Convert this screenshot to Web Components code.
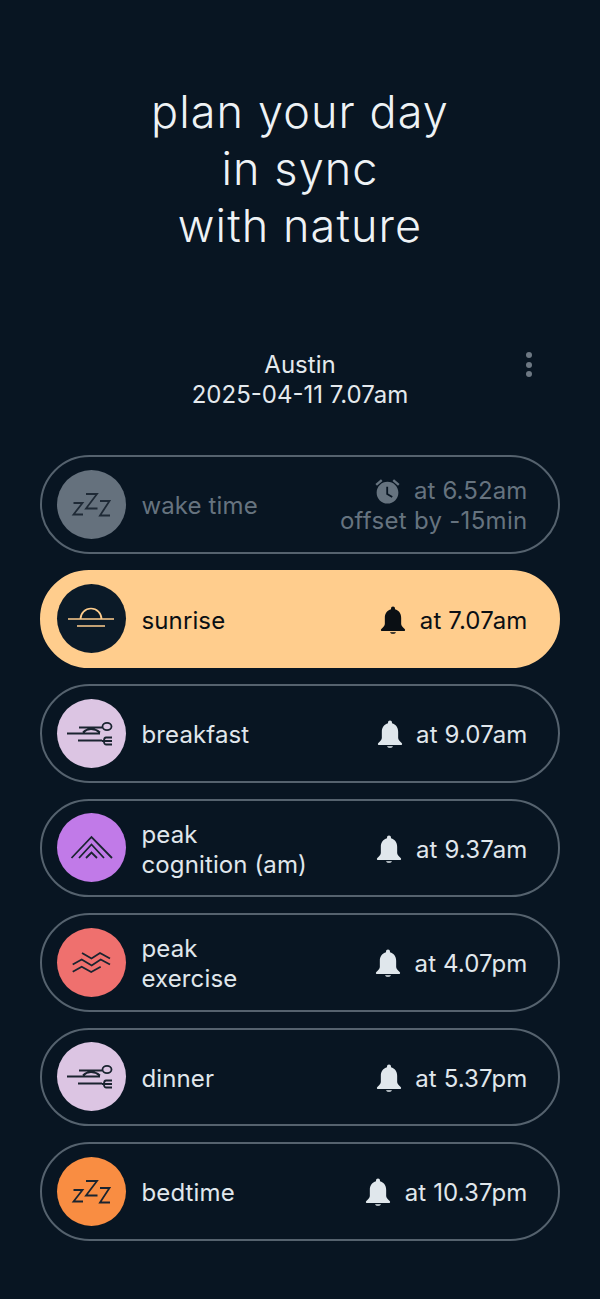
<!DOCTYPE html>
<html><head><meta charset="utf-8"><style>
html,body{margin:0;background:#081522;}
body{font-family:Inter,"Noto Sans",sans-serif;width:600px;height:1299px;overflow:hidden}
</style></head><body>
<svg width="0" height="0" style="position:absolute"><defs>
<path id="bell" d="M12 .5c-1 0-1.700.7-1.700 1.700v.6C7 3.700 5 6.500 5 10v5.500c0 1.500-1.500 3-3 4.200-.8.7-.4 1.800.7 1.800h18.600c1.100 0 1.500-1.100.7-1.800-1.500-1.200-3-2.700-3-4.200V10c0-3.500-2-6.300-5.300-7.200v-.6C13.700 1.200 13 .5 12 .5zM9.500 22.500h5c-.3 1-1.300 1.300-2.500 1.300s-2.200-.3-2.500-1.300z"/>
</defs></svg>
<template id="row-t"><style>
:host{display:flex;box-sizing:border-box;height:98.5px;border:2px solid #55626e;border-radius:50px;align-items:center;padding:0 30.5px 0 15px;color:#e0e7ec;font-size:24px;line-height:30px;letter-spacing:.12px}
:host([active]){background:#ffcd8d;border-color:#ffcd8d;color:#0a0f14}
:host([dim]){color:#66737f}
.ic{width:69px;height:69px;border-radius:50%;flex:none;display:flex;align-items:center;justify-content:center;background:var(--c);margin-right:15.5px}
.lab{flex:1;min-width:0;padding-top:4px}
.right{text-align:right;white-space:nowrap;padding-top:4px}
.r1{display:flex;justify-content:flex-end;align-items:center}
.sub{letter-spacing:.3px}
</style><div class="ic"><slot name="icon"></slot></div><div class="lab"><slot name="label"></slot></div><div class="right"><div class="r1"><slot name="bell"></slot><slot name="time"></slot></div><div class="sub"><slot name="sub"></slot></div></div></template>
<template id="title-t"><style>
:host{display:block;text-align:center;color:#eef2f5;font-size:45px;line-height:57px;font-weight:300;letter-spacing:1.1px;padding:83px 0 0}
</style><slot></slot></template>
<template id="head-t"><style>
:host{display:block;position:relative;text-align:center;color:#e4e9ed;font-size:24px;line-height:30px;margin-top:95.5px;height:60px}
.dots{position:absolute;left:525.500px;top:2.500px;width:6px;display:flex;flex-direction:column;gap:3.500px}
.dots i{width:6px;height:6px;border-radius:50%;background:#6d7883}
</style><slot></slot><div class="dots"><i></i><i></i><i></i></div></template>
<template id="list-t"><style>
:host{display:flex;flex-direction:column;gap:16px;margin:45.5px 40px 0}
</style><slot></slot></template>
<nature-title>plan your day<br>in sync<br>with nature</nature-title>
<place-head>Austin<br>2025-04-11 7.07am</place-head>
<day-list>
<day-row dim style="--c:#65717d">
 <svg slot="icon" width="69" height="69" viewBox="0 0 69 69" fill="none" stroke="#1f2a36" stroke-width="1.800"><path d="M16.500 33h9l-9 11.500h9.500M29 24h11L29 38.500h11.500M43 31h9.500L43 45.500h10"/></svg>
 <span slot="label">wake time</span>
 <svg slot="bell" width="29" height="29" viewBox="0 0 24 24" style="margin:-1px 12px -1px 0" fill="#66737f"><path d="M22 5.720l-4.600-3.860-1.290 1.530 4.600 3.860L22 5.720zM7.880 3.390L6.600 1.860 2 5.710l1.290 1.530 4.590-3.850zM12 4c-4.970 0-9 4.030-9 9s4.030 9 9 9 9-4.030 9-9-4.030-9-9-9zm3.500 13.200L11 14.500V8h1.500v5.700l3.800 2.300-.8 1.200z"/></svg>
 <span slot="time">at 6.52am</span>
 <span slot="sub">offset by -15min</span>
</day-row>
<day-row active style="--c:#0b1a28">
 <svg slot="icon" width="69" height="69" viewBox="0 0 69 69" fill="none" stroke="#ffcd8d" stroke-width="1.700"><path d="M11 35h46M20 42h28M23.500 35a10.500 10.500 0 0 1 21 0"/></svg>
 <span slot="label">sunrise</span>
 <svg slot="bell" width="28" height="28" viewBox="0 0 24 24" fill="#0a0f14" style="margin:-2px 12.500px 0 0"><use href="#bell"/></svg>
 <span slot="time">at 7.07am</span>
</day-row>
<day-row style="--c:#dcc5e3">
 <svg slot="icon" width="69" height="69" viewBox="0 0 69 69" fill="none" stroke="#1a2430" stroke-width="1.800"><path d="M22 28.500h23M10 34.500h33M26 33.500c3-3 5-3.500 8-3.500s6 1 9 3.500M21 41.500h24"/><ellipse cx="50" cy="27.500" rx="4.500" ry="3.600"/><path d="M55 38.500h-6c-2.500 0-3 7 0 7h6M45 42h10"/></svg>
 <span slot="label">breakfast</span>
 <svg slot="bell" width="28" height="28" viewBox="0 0 24 24" fill="#e0e7ec" style="margin:-2px 12.500px 0 0"><use href="#bell"/></svg>
 <span slot="time">at 9.07am</span>
</day-row>
<day-row style="--c:#c17ae8">
 <svg slot="icon" width="69" height="69" viewBox="0 0 69 69" fill="none" stroke="#1a2430" stroke-width="1.800"><path d="M14.500 45L34.500 24 55 45M22 45L34.500 31.500 47 45M29 45L34.500 39.500 40 45"/></svg>
 <span slot="label">peak<br>cognition (am)</span>
 <svg slot="bell" width="28" height="28" viewBox="0 0 24 24" fill="#e0e7ec" style="margin:-2px 12.500px 0 0"><use href="#bell"/></svg>
 <span slot="time">at 9.37am</span>
</day-row>
<day-row style="--c:#ef706e">
 <svg slot="icon" width="69" height="69" viewBox="0 0 69 69" fill="none" stroke="#1a2430" stroke-width="1.800"><path d="M25 25l9.500 5.500L43 25l10 5.500M15.700 36.500l9-5 10 6 9-6 9.300 5M15.700 43.800l9-5 9.500 5.200 9.500-5.200"/></svg>
 <span slot="label">peak<br>exercise</span>
 <svg slot="bell" width="28" height="28" viewBox="0 0 24 24" fill="#e0e7ec" style="margin:-2px 12.500px 0 0"><use href="#bell"/></svg>
 <span slot="time">at 4.07pm</span>
</day-row>
<day-row style="--c:#dcc5e3">
 <svg slot="icon" width="69" height="69" viewBox="0 0 69 69" fill="none" stroke="#1a2430" stroke-width="1.800"><path d="M22 28.500h23M10 34.500h33M26 33.500c3-3 5-3.500 8-3.500s6 1 9 3.500M21 41.500h24"/><ellipse cx="50" cy="27.500" rx="4.500" ry="3.600"/><path d="M55 38.500h-6c-2.500 0-3 7 0 7h6M45 42h10"/></svg>
 <span slot="label">dinner</span>
 <svg slot="bell" width="28" height="28" viewBox="0 0 24 24" fill="#e0e7ec" style="margin:-2px 12.500px 0 0"><use href="#bell"/></svg>
 <span slot="time">at 5.37pm</span>
</day-row>
<day-row style="--c:#f98d42">
 <svg slot="icon" width="69" height="69" viewBox="0 0 69 69" fill="none" stroke="#1a2430" stroke-width="1.800"><path d="M16.500 33h9l-9 11.500h9.500M29 24h11L29 38.500h11.500M43 31h9.500L43 45.500h10"/></svg>
 <span slot="label">bedtime</span>
 <svg slot="bell" width="28" height="28" viewBox="0 0 24 24" fill="#e0e7ec" style="margin:-2px 12.500px 0 0"><use href="#bell"/></svg>
 <span slot="time">at 10.37pm</span>
</day-row>
</day-list>
<script>
function def(name,id){customElements.define(name,class extends HTMLElement{constructor(){super();this.attachShadow({mode:"open"}).appendChild(document.getElementById(id).content.cloneNode(true));}});}
def("nature-title","title-t");def("place-head","head-t");def("day-list","list-t");def("day-row","row-t");
</script>
</body></html>
